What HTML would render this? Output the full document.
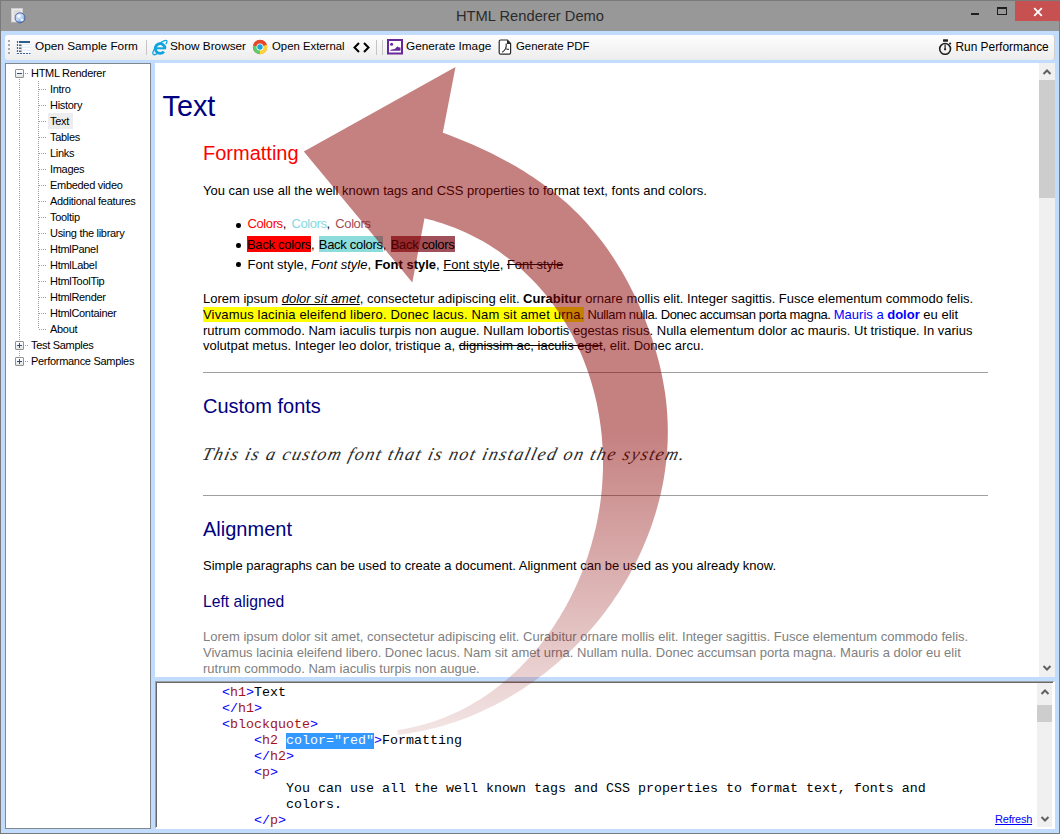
<!DOCTYPE html>
<html><head><meta charset="utf-8">
<style>
*{margin:0;padding:0;box-sizing:border-box}
html,body{width:1060px;height:834px;overflow:hidden;background:#c1dcfc;font-family:"Liberation Sans",sans-serif}
.a{position:absolute;white-space:nowrap}
#win{position:absolute;left:0;top:0;width:1060px;height:834px;border:1px solid #7a7a7a;border-top:none}
#title{position:absolute;left:0;top:0;width:1060px;height:31px;background:#989898;border-top:1px solid #7a7a7a}
#tb{position:absolute;left:5px;top:35px;width:1050px;height:25px;border-radius:3px;background:linear-gradient(#fefefe,#f6f6f6 45%,#ededed);border-right:1px solid #cfcfcf}
.tbt{position:absolute;top:38px;font-size:11.8px;line-height:16px;color:#000}
#tree{position:absolute;left:5px;top:63px;width:146px;height:766px;background:#fff;border:1px solid #828790}
.tr{position:absolute;font-size:11px;line-height:16px;letter-spacing:-0.3px;color:#000}
#content{position:absolute;left:155px;top:63px;width:900px;height:614px;background:#fff;overflow:hidden}
.c{position:absolute;white-space:nowrap;font-size:13px;line-height:15.7px;color:#000}
#code{position:absolute;left:155px;top:681px;width:900px;height:148px;background:#fff;border-top:1px solid #a0a0a0;border-left:1px solid #a0a0a0;box-shadow:inset 1px 1px 0 #696969;padding:1px 0 0 1px;border-right:2px solid #fff;border-bottom:2px solid #fff;overflow:hidden}
.k{position:absolute;white-space:pre;font-family:"Liberation Mono",monospace;font-size:13.33px;line-height:16px;color:#000}
.b{color:#0000ff}.m{color:#a31515}
.sb{position:absolute;background:#f0f0f0}
.th{position:absolute;background:#cdcdcd}
</style></head><body>
<div id="title"></div>
<div id="win"></div>

<!-- title bar -->
<svg class="a" style="left:11px;top:8px" width="16" height="16" viewBox="0 0 16 16">
<defs><radialGradient id="gl" cx="0.4" cy="0.3" r="0.8"><stop offset="0" stop-color="#f0f6fe"/><stop offset="0.6" stop-color="#9cc0ec"/><stop offset="1" stop-color="#3a6cc0"/></radialGradient></defs>
<rect x="0.5" y="0.5" width="11" height="13.5" fill="#ececec" stroke="#d0d0d0" stroke-width="0.8"/>
<path d="M2.5 3 H9.5 M2.5 5 H9.5 M2.5 7 H6" stroke="#c4c4c4" stroke-width="0.8"/>
<circle cx="9" cy="9.8" r="5" fill="url(#gl)" stroke="#4a5a9a" stroke-width="0.9"/>
<path d="M6.2 7.8 C7 6.4 9 6.3 10 7.6 C9.4 8.8 8.2 9.6 7.2 9.8 Z M9.8 10.6 C11 10.2 12.6 10.8 12.8 12 C11.8 13.6 10.2 13.6 9.6 12.2 Z M5.5 10.5 C6.3 10.8 6.8 12 6.5 13 C5.6 12.6 5.2 11.6 5.5 10.5 Z" fill="#fafcff" opacity="0.9"/>
</svg>
<div class="a" style="left:456px;top:6.5px;font-size:14.7px;line-height:18px;color:#2b2b2b">HTML Renderer Demo</div>

<div class="a" style="left:1015px;top:1px;width:45px;height:20px;background:#c75050"></div>
<svg class="a" style="left:1033px;top:7px" width="10" height="10" viewBox="0 0 10 10"><path d="M1.2 1.2 L8.8 8.8 M8.8 1.2 L1.2 8.8" stroke="#fff" stroke-width="1.8"/></svg>
<div class="a" style="left:971px;top:13px;width:8px;height:2px;background:#1e1e1e"></div>
<div class="a" style="left:997px;top:7px;width:10px;height:8px;border:1px solid #1e1e1e;border-top-width:2px"></div>
<!-- toolbar -->
<div id="tb"></div>
<!-- grip -->
<div class="a" style="left:8px;top:40px;width:2px;height:2px;background:#a8a8a8;box-shadow:0 4px #a8a8a8,0 8px #a8a8a8,0 12px #a8a8a8"></div>
<!-- form icon -->
<svg class="a" style="left:16px;top:40px" width="15" height="15" viewBox="0 0 15 15">
<rect x="1" y="1" width="14" height="14" fill="#f7f9fc"/>
<rect x="3" y="4" width="12" height="10" fill="#e8eef6"/>
<rect x="6.5" y="5" width="8" height="1.5" fill="#fff"/><rect x="6.5" y="8" width="8" height="1.5" fill="#fff"/><rect x="6.5" y="11" width="8" height="1.5" fill="#fff"/>
<rect x="3" y="1" width="11" height="2" fill="#2f5d8c"/>
<path d="M1.5 1 V14" stroke="#3d6590" stroke-width="1.2" stroke-dasharray="2 1"/>
<path d="M1 13.5 H14.5" stroke="#3d6590" stroke-width="1.2" stroke-dasharray="2 1"/>
<rect x="3" y="4.5" width="2.5" height="1.5" fill="#666"/><rect x="3" y="7.5" width="2.5" height="1.5" fill="#666"/><rect x="3" y="10.5" width="2.5" height="1.5" fill="#666"/>
</svg>
<div class="tbt a" style="left:35px">Open Sample Form</div>
<div class="a" style="left:146px;top:40px;width:1px;height:15px;background:#c5c5c5"></div>
<!-- IE icon -->
<svg class="a" style="left:151px;top:39px" width="17" height="17" viewBox="0 0 17 17">
<path d="M2.2 15.2 C0.8 13.8 3.5 8.8 7.6 5.2 C11.5 1.8 15 0.6 15.8 1.8 C16.3 2.6 15.6 4 14.8 5" fill="none" stroke="#0fa4dc" stroke-width="1.3"/>
<path d="M2.2 15.2 C3.2 16.2 5.2 15.4 6.6 14.4" fill="none" stroke="#0fa4dc" stroke-width="1.3"/>
<path d="M14 9.4 A4.9 4.9 0 1 0 12.9 12.6" fill="none" stroke="#0fa4dc" stroke-width="2.8"/>
<rect x="5" y="8.3" width="10" height="2" fill="#0fa4dc"/>
</svg>
<div class="tbt a" style="left:170px">Show Browser</div>
<!-- chrome icon -->
<svg class="a" style="left:252px;top:39px" width="16" height="16" viewBox="0 0 16 16">
<circle cx="8" cy="8" r="7.2" fill="#e2492a"/>
<path d="M8 8 L1.2 6.2 A7.2 7.2 0 0 0 7.6 15.2 Z" fill="#5dcc6b"/>
<path d="M8 8 L7.6 15.2 A7.2 7.2 0 0 0 14.9 5.6 Z" fill="#fbd33a"/>
<path d="M8 8 L1.2 6.2 A7.2 7.2 0 0 1 14.9 5.6 Z" fill="#e2492a"/>
<circle cx="8" cy="8" r="3.5" fill="#fff"/>
<circle cx="8" cy="8" r="2.7" fill="#1ba3dc"/>
</svg>
<div class="tbt a" style="left:272px;font-size:11.35px">Open External</div>
<!-- code icon -->
<svg class="a" style="left:353px;top:42px" width="17" height="11" viewBox="0 0 17 11">
<path d="M6 1 L1.5 5.5 L6 10" fill="none" stroke="#000" stroke-width="2"/>
<path d="M11 1 L15.5 5.5 L11 10" fill="none" stroke="#000" stroke-width="2"/>
</svg>
<div class="a" style="left:376px;top:40px;width:1px;height:15px;background:#c5c5c5"></div>
<div class="a" style="left:382px;top:40px;width:1px;height:15px;background:#c5c5c5"></div>
<!-- image icon -->
<svg class="a" style="left:387px;top:39px" width="16" height="16" viewBox="0 0 16 16">
<rect x="1" y="1" width="14" height="13.5" fill="#fff" stroke="#68289a" stroke-width="2"/>
<circle cx="4.6" cy="5.3" r="1.5" fill="#68289a"/>
<path d="M2.8 11.8 L4.5 10.5 L7.8 10 L10.5 7.2 L11.5 8.2 L13.5 8.4 L13.5 11.8 Z" fill="#68289a"/>
</svg>
<div class="tbt a" style="left:406px">Generate Image</div>
<!-- pdf icon -->
<svg class="a" style="left:498px;top:39px" width="14" height="16" viewBox="0 0 14 16">
<path d="M2.6 1 H9.4 L12.6 4.4 V13.8 Q12.6 15.2 11.2 15.2 H2.6 Q1.2 15.2 1.2 13.8 V2.4 Q1.2 1 2.6 1 Z" fill="#fff" stroke="#2a2a2a" stroke-width="1.2"/>
<path d="M9 1 V5 H12.8 Z" fill="#2a2a2a"/>
<path d="M8.2 4.5 C8.4 6.5 8.2 8.5 7.5 9.8 C6.8 11 5.8 12.3 4.2 13.2 M7.6 9.6 C8.5 10.2 9.8 10.4 10.9 10.3" fill="none" stroke="#2a2a2a" stroke-width="1.1"/>
</svg>
<div class="tbt a" style="left:516px;font-size:11.4px">Generate PDF</div>
<!-- stopwatch -->
<svg class="a" style="left:938px;top:38px" width="15" height="17" viewBox="0 0 15 17">
<rect x="5" y="1.2" width="5" height="2.6" rx="0.5" fill="#222"/>
<circle cx="7.1" cy="10.9" r="5.4" fill="none" stroke="#222" stroke-width="1.6"/>
<path d="M7.1 11.6 L7.1 6.6" stroke="#222" stroke-width="1.2"/>
<circle cx="7.1" cy="11.3" r="1.1" fill="#222"/>
<rect x="11.2" y="4.6" width="1.8" height="1.8" fill="#222" transform="rotate(45 12.1 5.5)"/>
</svg>
<div class="tbt a" style="left:955.5px;font-size:11.9px;top:38.7px">Run Performance</div>

<!-- tree -->
<div id="tree"></div>
<div class="tr a" style="left:31px;top:64.9px">HTML Renderer</div>
<div class="a" style="left:15px;top:69px;width:9px;height:9px;border:1px solid #919191;border-radius:1px;background:linear-gradient(#fff,#e6e6e6)"></div>
<div class="a" style="left:17px;top:73px;width:5px;height:1px;background:#2f4d8a"></div>
<div class="a" style="left:25px;top:73px;width:4px;height:1px;background-image:linear-gradient(90deg,#a0a0a0 50%,transparent 50%);background-size:2px 1px"></div>
<div class="a" style="left:19px;top:79px;width:1px;height:282px;background-image:linear-gradient(#a0a0a0 50%,transparent 50%);background-size:1px 2px"></div>
<div class="a" style="left:38px;top:81px;width:1px;height:248px;background-image:linear-gradient(#a0a0a0 50%,transparent 50%);background-size:1px 2px"></div>
<div class="a" style="left:39px;top:89px;width:8px;height:1px;background-image:linear-gradient(90deg,#a0a0a0 50%,transparent 50%);background-size:2px 1px"></div>
<div class="tr a" style="left:50px;top:80.9px">Intro</div>
<div class="a" style="left:39px;top:105px;width:8px;height:1px;background-image:linear-gradient(90deg,#a0a0a0 50%,transparent 50%);background-size:2px 1px"></div>
<div class="tr a" style="left:50px;top:96.9px">History</div>
<div class="a" style="left:39px;top:121px;width:8px;height:1px;background-image:linear-gradient(90deg,#a0a0a0 50%,transparent 50%);background-size:2px 1px"></div>
<div class="a" style="left:48px;top:113px;width:25px;height:16px;background:#ededed"></div>
<div class="tr a" style="left:50px;top:112.9px">Text</div>
<div class="a" style="left:39px;top:137px;width:8px;height:1px;background-image:linear-gradient(90deg,#a0a0a0 50%,transparent 50%);background-size:2px 1px"></div>
<div class="tr a" style="left:50px;top:128.9px">Tables</div>
<div class="a" style="left:39px;top:153px;width:8px;height:1px;background-image:linear-gradient(90deg,#a0a0a0 50%,transparent 50%);background-size:2px 1px"></div>
<div class="tr a" style="left:50px;top:144.9px">Links</div>
<div class="a" style="left:39px;top:169px;width:8px;height:1px;background-image:linear-gradient(90deg,#a0a0a0 50%,transparent 50%);background-size:2px 1px"></div>
<div class="tr a" style="left:50px;top:160.9px">Images</div>
<div class="a" style="left:39px;top:185px;width:8px;height:1px;background-image:linear-gradient(90deg,#a0a0a0 50%,transparent 50%);background-size:2px 1px"></div>
<div class="tr a" style="left:50px;top:176.9px">Embeded video</div>
<div class="a" style="left:39px;top:201px;width:8px;height:1px;background-image:linear-gradient(90deg,#a0a0a0 50%,transparent 50%);background-size:2px 1px"></div>
<div class="tr a" style="left:50px;top:192.9px">Additional features</div>
<div class="a" style="left:39px;top:217px;width:8px;height:1px;background-image:linear-gradient(90deg,#a0a0a0 50%,transparent 50%);background-size:2px 1px"></div>
<div class="tr a" style="left:50px;top:208.9px">Tooltip</div>
<div class="a" style="left:39px;top:233px;width:8px;height:1px;background-image:linear-gradient(90deg,#a0a0a0 50%,transparent 50%);background-size:2px 1px"></div>
<div class="tr a" style="left:50px;top:224.9px">Using the library</div>
<div class="a" style="left:39px;top:249px;width:8px;height:1px;background-image:linear-gradient(90deg,#a0a0a0 50%,transparent 50%);background-size:2px 1px"></div>
<div class="tr a" style="left:50px;top:240.9px">HtmlPanel</div>
<div class="a" style="left:39px;top:265px;width:8px;height:1px;background-image:linear-gradient(90deg,#a0a0a0 50%,transparent 50%);background-size:2px 1px"></div>
<div class="tr a" style="left:50px;top:256.9px">HtmlLabel</div>
<div class="a" style="left:39px;top:281px;width:8px;height:1px;background-image:linear-gradient(90deg,#a0a0a0 50%,transparent 50%);background-size:2px 1px"></div>
<div class="tr a" style="left:50px;top:272.9px">HtmlToolTip</div>
<div class="a" style="left:39px;top:297px;width:8px;height:1px;background-image:linear-gradient(90deg,#a0a0a0 50%,transparent 50%);background-size:2px 1px"></div>
<div class="tr a" style="left:50px;top:288.9px">HtmlRender</div>
<div class="a" style="left:39px;top:313px;width:8px;height:1px;background-image:linear-gradient(90deg,#a0a0a0 50%,transparent 50%);background-size:2px 1px"></div>
<div class="tr a" style="left:50px;top:304.9px">HtmlContainer</div>
<div class="a" style="left:39px;top:329px;width:8px;height:1px;background-image:linear-gradient(90deg,#a0a0a0 50%,transparent 50%);background-size:2px 1px"></div>
<div class="tr a" style="left:50px;top:320.9px">About</div>
<div class="a" style="left:15px;top:341px;width:9px;height:9px;border:1px solid #919191;border-radius:1px;background:linear-gradient(#fff,#e6e6e6)"></div>
<div class="a" style="left:17px;top:345px;width:5px;height:1px;background:#2f4d8a"></div>
<div class="a" style="left:19px;top:343px;width:1px;height:5px;background:#2f4d8a"></div>
<div class="a" style="left:25px;top:345px;width:4px;height:1px;background-image:linear-gradient(90deg,#a0a0a0 50%,transparent 50%);background-size:2px 1px"></div>
<div class="tr a" style="left:31px;top:336.9px">Test Samples</div>
<div class="a" style="left:15px;top:357px;width:9px;height:9px;border:1px solid #919191;border-radius:1px;background:linear-gradient(#fff,#e6e6e6)"></div>
<div class="a" style="left:17px;top:361px;width:5px;height:1px;background:#2f4d8a"></div>
<div class="a" style="left:19px;top:359px;width:1px;height:5px;background:#2f4d8a"></div>
<div class="a" style="left:25px;top:361px;width:4px;height:1px;background-image:linear-gradient(90deg,#a0a0a0 50%,transparent 50%);background-size:2px 1px"></div>
<div class="tr a" style="left:31px;top:352.9px">Performance Samples</div>

<!-- content -->
<div id="content"></div>
<div class="c" style="left:162.5px;top:88.99px;font-size:28.8px;line-height:34px;color:#000080">Text</div>
<div class="c" style="left:203px;top:140.57px;font-size:20px;line-height:24px;color:#ff0000">Formatting</div>
<div class="c" style="left:203px;top:182.65px;font-size:13px;line-height:15.7px;">You can use all the well known tags and CSS properties to format text, fonts and colors.</div>
<div class="a" style="left:236.3px;top:223px;width:4.6px;height:4.6px;border-radius:50%;background:#000"></div>
<div class="a" style="left:236.3px;top:243px;width:4.6px;height:4.6px;border-radius:50%;background:#000"></div>
<div class="a" style="left:236.3px;top:262px;width:4.6px;height:4.6px;border-radius:50%;background:#000"></div>
<div class="c" style="left:247.5px;top:216.25px;font-size:13px;line-height:15.7px;letter-spacing:-0.4px"><span style="color:#ff0000">Colors</span>, <span style="color:#87d8de;margin-left:2.3px">Colors</span>, <span style="color:#a05058;margin-left:2.3px">Colors</span></div>
<div class="c" style="left:247px;top:236.65px;font-size:13px;line-height:15.7px;letter-spacing:-0.3px"><span style="background:#ff0000;padding-top:0.6px">Back colors</span>, <span style="background:#8cdcdc;padding-top:0.6px;margin-left:1.3px">Back colors</span>, <span style="background:#a05058;padding-top:0.6px;margin-left:1.3px">Back colors</span></div>
<div class="c" style="left:247.5px;top:256.75px;font-size:13px;line-height:15.7px;">Font style, <i>Font style</i>, <b>Font style</b>, <u>Font style</u>, <s>Font style</s></div>
<div class="c" style="left:203px;top:290.55px;font-size:13px;line-height:15.7px;">Lorem ipsum <i><u>dolor sit amet</u></i>, consectetur adipiscing elit. <b>Curabitur</b> ornare mollis elit. Integer sagittis. Fusce elementum commodo felis.</div>
<div class="c" style="left:203px;top:306.8px;font-size:13px;line-height:15.7px;"><span style="background:#ffff00;letter-spacing:0.17px">Vivamus lacinia eleifend libero. Donec lacus. Nam sit amet urna.</span><span style="letter-spacing:-0.4px"> Nullam nulla. Donec accumsan porta magna. </span><span style="color:#0000ff">Mauris a <b>dolor</b></span> eu elit</div>
<div class="c" style="left:203px;top:322.6px;font-size:13px;line-height:15.7px;">rutrum commodo. Nam iaculis turpis non augue. Nullam lobortis egestas risus. Nulla elementum dolor ac mauris. Ut tristique. In varius</div>
<div class="c" style="left:203px;top:338.3px;font-size:13px;line-height:15.7px;">volutpat metus. Integer leo dolor, tristique a, <s>dignissim ac, iaculis eget</s>, elit. Donec arcu.</div>
<div class="a" style="left:203px;top:372px;width:785px;height:1px;background:#a0a0a0"></div>
<div class="c" style="left:203px;top:393.97px;font-size:20px;line-height:24px;color:#000080">Custom fonts</div>
<div class="c" style="left:201px;top:443.5px;font-size:18px;line-height:20px;font-family:'Liberation Serif',serif;font-style:italic;letter-spacing:1.47px;word-spacing:0px;color:#2a2a2a;transform:skewX(-14deg);transform-origin:0 17px">This is a custom font that is not installed on the system.</div>
<div class="a" style="left:203px;top:495px;width:785px;height:1px;background:#a0a0a0"></div>
<div class="c" style="left:203px;top:516.67px;font-size:20px;line-height:24px;color:#000080">Alignment</div>
<div class="c" style="left:203px;top:558.1px;font-size:13px;line-height:15.7px;">Simple paragraphs can be used to create a document. Alignment can be used as you already know.</div>
<div class="c" style="left:203px;top:592px;font-size:15.7px;line-height:19px;color:#000080">Left aligned</div>
<div class="c" style="left:203px;top:629.1px;font-size:13px;line-height:15.7px;color:#808080">Lorem ipsum dolor sit amet, consectetur adipiscing elit. Curabitur ornare mollis elit. Integer sagittis. Fusce elementum commodo felis.</div>
<div class="c" style="left:203px;top:644.7px;font-size:13px;line-height:15.7px;color:#808080">Vivamus lacinia eleifend libero. Donec lacus. Nam sit amet urna. Nullam nulla. Donec accumsan porta magna. Mauris a dolor eu elit</div>
<div class="c" style="left:203px;top:660.6px;font-size:13px;line-height:15.7px;color:#808080">rutrum commodo. Nam iaculis turpis non augue.</div>
<div class="sb" style="left:1039px;top:63px;width:16px;height:614px"></div>
<div class="th" style="left:1039px;top:80px;width:16px;height:118px"></div>
<svg class="a" style="left:1042px;top:68px" width="10" height="8" viewBox="0 0 10 8"><path d="M1.5 6 L5 2.5 L8.5 6" fill="none" stroke="#606060" stroke-width="2"/></svg>
<svg class="a" style="left:1042px;top:664px" width="10" height="8" viewBox="0 0 10 8"><path d="M1.5 2 L5 5.5 L8.5 2" fill="none" stroke="#606060" stroke-width="2"/></svg>

<!-- code -->
<div id="code"></div>
<div class="k" style="left:222px;top:685.45px"><span class="b">&lt;</span><span class="m">h1</span><span class="b">&gt;</span>Text</div>
<div class="k" style="left:222px;top:701.45px"><span class="b">&lt;/</span><span class="m">h1</span><span class="b">&gt;</span></div>
<div class="k" style="left:222px;top:717.45px"><span class="b">&lt;</span><span class="m">blockquote</span><span class="b">&gt;</span></div>
<div class="k" style="left:254px;top:733.45px"><span class="b">&lt;</span><span class="m">h2</span> <span style="background:#3399ff;color:#fff;display:inline-block;height:16px;vertical-align:top">color="red"</span><span class="b">&gt;</span>Formatting</div>
<div class="k" style="left:254px;top:749.45px"><span class="b">&lt;/</span><span class="m">h2</span><span class="b">&gt;</span></div>
<div class="k" style="left:254px;top:765.45px"><span class="b">&lt;</span><span class="m">p</span><span class="b">&gt;</span></div>
<div class="k" style="left:286px;top:781.45px">You can use all the well known tags and CSS properties to format text, fonts and</div>
<div class="k" style="left:286px;top:797.45px">colors.</div>
<div class="k" style="left:254px;top:813.45px"><span class="b">&lt;/</span><span class="m">p</span><span class="b">&gt;</span></div>
<div class="sb" style="left:1037px;top:683px;width:15px;height:144px"></div>
<div class="th" style="left:1037px;top:705px;width:15px;height:17px"></div>
<svg class="a" style="left:1039.5px;top:688px" width="10" height="8" viewBox="0 0 10 8"><path d="M1.5 6 L5 2.5 L8.5 6" fill="none" stroke="#606060" stroke-width="2"/></svg>
<svg class="a" style="left:1039.5px;top:815px" width="10" height="8" viewBox="0 0 10 8"><path d="M1.5 2 L5 5.5 L8.5 2" fill="none" stroke="#606060" stroke-width="2"/></svg>
<div class="a" style="left:995px;top:812px;font-size:11px;line-height:14px;color:#0000ff;text-decoration:underline;letter-spacing:-0.2px">Refresh</div>






<!--ARROW--><svg class="a" style="left:0;top:0;pointer-events:none" width="1060" height="834" viewBox="0 0 1060 834">
<defs><linearGradient id="ag" gradientUnits="userSpaceOnUse" x1="0" y1="430" x2="0" y2="736">
<stop offset="0" stop-color="#8b0000" stop-opacity="0.5"/><stop offset="1" stop-color="#8b0000" stop-opacity="0.1"/></linearGradient></defs>
<path d="M455.5 67.1 L442.8 132.8 L447.8 134.6 L452.8 136.5 L457.8 138.5 L462.7 140.5 L467.6 142.5 L472.5 144.6 L477.4 146.8 L482.3 149.0 L487.1 151.3 L491.9 153.6 L496.6 156.0 L501.3 158.4 L506.0 160.9 L510.7 163.5 L515.3 166.1 L519.8 168.8 L524.3 171.6 L528.8 174.4 L533.2 177.3 L537.5 180.3 L541.8 183.3 L546.1 186.4 L550.3 189.5 L554.4 192.7 L558.4 196.0 L562.4 199.4 L566.4 202.8 L570.2 206.3 L574.0 209.9 L577.7 213.6 L581.3 217.3 L584.9 221.1 L588.4 225.0 L591.8 228.9 L595.2 232.9 L598.4 237.0 L601.6 241.1 L604.8 245.3 L607.8 249.6 L610.8 253.9 L613.7 258.3 L616.5 262.7 L619.3 267.2 L622.0 271.7 L624.6 276.3 L627.2 281.0 L629.7 285.7 L632.1 290.4 L634.5 295.2 L636.7 300.1 L639.0 304.9 L641.1 309.9 L643.2 314.8 L645.2 319.8 L647.1 324.9 L649.0 329.9 L650.8 335.0 L652.5 340.1 L654.2 345.3 L655.7 350.5 L657.2 355.7 L658.6 360.9 L659.9 366.1 L661.1 371.4 L662.2 376.7 L663.2 382.0 L664.1 387.2 L665.0 392.5 L665.7 397.8 L666.3 403.1 L666.8 408.4 L667.2 413.7 L667.5 419.0 L667.7 424.3 L667.8 429.6 L667.8 434.9 L667.7 440.2 L667.5 445.4 L667.1 450.7 L666.7 455.9 L666.2 461.1 L665.6 466.3 L664.9 471.5 L664.1 476.7 L663.2 481.9 L662.2 487.0 L661.1 492.2 L659.9 497.3 L658.6 502.3 L657.2 507.4 L655.8 512.4 L654.2 517.4 L652.6 522.4 L650.9 527.4 L649.1 532.3 L647.2 537.2 L645.2 542.1 L643.1 546.9 L641.0 551.7 L638.8 556.5 L636.5 561.2 L634.1 565.9 L631.6 570.5 L629.1 575.2 L626.5 579.7 L623.8 584.3 L621.0 588.8 L618.2 593.2 L615.2 597.6 L612.3 602.0 L609.2 606.3 L606.1 610.5 L602.9 614.7 L599.6 618.9 L596.3 623.0 L592.9 627.1 L589.4 631.1 L585.9 635.0 L582.3 638.9 L578.7 642.7 L575.0 646.5 L571.2 650.2 L567.4 653.9 L563.5 657.4 L559.5 661.0 L555.5 664.4 L551.4 667.8 L547.3 671.2 L543.2 674.4 L538.9 677.6 L534.7 680.7 L530.3 683.8 L525.9 686.8 L521.5 689.7 L517.0 692.5 L512.5 695.3 L508.0 697.9 L503.3 700.5 L498.7 703.1 L494.0 705.5 L489.2 707.8 L484.4 710.1 L479.6 712.3 L474.8 714.4 L469.8 716.4 L464.9 718.4 L459.9 720.2 L454.9 722.0 L449.8 723.6 L444.8 725.2 L439.6 726.7 L434.5 728.1 L429.3 729.3 L424.1 730.5 L418.8 731.6 L413.6 732.6 L408.3 733.5 L402.9 734.3 L397.6 735.0 L397.6 730.0 L402.1 729.3 L406.5 728.5 L410.9 727.6 L415.2 726.7 L419.6 725.6 L423.8 724.5 L428.1 723.2 L432.2 721.9 L436.4 720.5 L440.5 719.0 L444.6 717.5 L448.6 715.8 L452.6 714.1 L456.5 712.3 L460.4 710.4 L464.2 708.4 L468.0 706.4 L471.8 704.3 L475.5 702.1 L479.2 699.9 L482.8 697.6 L486.4 695.2 L489.9 692.7 L493.4 690.2 L496.8 687.6 L500.2 685.0 L503.5 682.3 L506.8 679.5 L510.1 676.7 L513.3 673.8 L516.4 670.9 L519.5 667.9 L522.5 664.8 L525.5 661.7 L528.5 658.5 L531.4 655.3 L534.2 652.0 L537.0 648.7 L539.7 645.4 L542.4 642.0 L545.0 638.5 L547.6 635.0 L550.1 631.5 L552.6 627.9 L555.0 624.2 L557.4 620.6 L559.7 616.9 L561.9 613.1 L564.1 609.4 L566.3 605.5 L568.3 601.7 L570.4 597.8 L572.3 593.9 L574.2 590.0 L576.1 586.0 L577.9 582.0 L579.6 578.0 L581.3 573.9 L582.9 569.8 L584.5 565.7 L586.0 561.6 L587.4 557.5 L588.8 553.3 L590.1 549.1 L591.3 544.9 L592.5 540.6 L593.6 536.4 L594.7 532.1 L595.7 527.9 L596.7 523.6 L597.5 519.3 L598.3 514.9 L599.1 510.6 L599.8 506.3 L600.4 501.9 L601.0 497.6 L601.4 493.2 L601.9 488.8 L602.2 484.5 L602.5 480.1 L602.7 475.7 L602.9 471.3 L603.0 466.9 L603.0 462.6 L603.0 458.2 L602.9 453.8 L602.7 449.4 L602.4 445.0 L602.1 440.7 L601.8 436.3 L601.3 432.0 L600.8 427.6 L600.2 423.3 L599.6 419.0 L598.9 414.7 L598.1 410.4 L597.3 406.1 L596.4 401.8 L595.4 397.6 L594.4 393.4 L593.3 389.2 L592.1 385.0 L590.9 380.8 L589.6 376.7 L588.2 372.6 L586.8 368.5 L585.3 364.4 L583.8 360.4 L582.2 356.4 L580.5 352.4 L578.7 348.5 L576.9 344.6 L575.1 340.7 L573.1 336.8 L571.1 333.0 L569.0 329.3 L566.9 325.5 L564.7 321.8 L562.5 318.2 L560.1 314.6 L557.8 311.0 L555.3 307.5 L552.8 304.0 L550.2 300.6 L547.6 297.2 L544.9 293.8 L542.1 290.6 L539.3 287.3 L536.4 284.1 L533.5 281.0 L530.5 277.9 L527.4 274.9 L524.3 271.9 L521.1 269.0 L517.9 266.2 L514.6 263.4 L511.2 260.6 L507.8 258.0 L504.3 255.4 L500.8 252.8 L497.3 250.3 L493.6 247.9 L490.0 245.6 L486.2 243.3 L482.5 241.1 L478.6 239.0 L474.7 236.9 L470.8 235.0 L466.8 233.0 L462.8 231.2 L458.7 229.4 L454.6 227.8 L450.4 226.2 L446.2 224.7 L442.0 223.2 L437.7 221.9 L433.3 220.6 L428.9 219.4 L424.5 218.3 L412.3 282.4 L303.8 151.4 Z" fill="url(#ag)"/>
</svg><!--/ARROW-->
</body></html>
